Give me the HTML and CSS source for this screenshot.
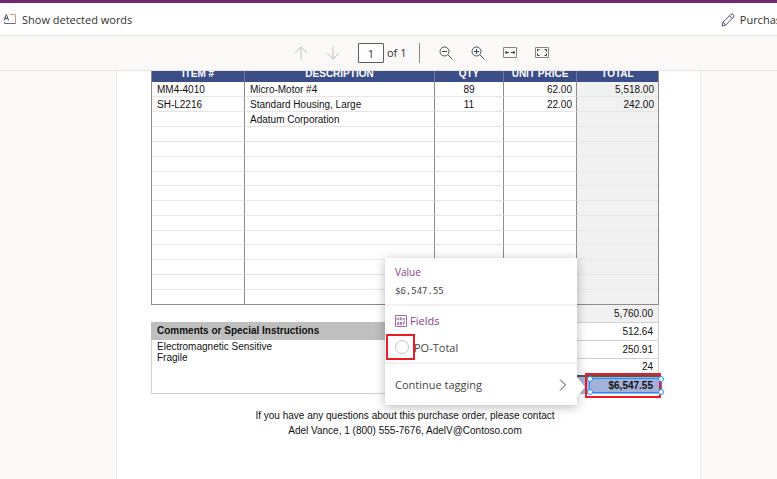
FILE: index.html
```html
<!DOCTYPE html>
<html lang="en">
<head>
<meta charset="utf-8">
<title>Document tagging</title>
<link rel="stylesheet" href="styles.css">
</head>
<body>
<header class="commands">
  <button class="command" type="button">
    <svg width="14" height="14" viewBox="0 0 14 14" fill="none"><path d="M1 7.500 3.300 1.500 5.700 7.500M1.800 5.500H5" stroke="#51496b"/><path d="M7 1.500H12.500V10.500" stroke="#c49a86"/><path d="M1.500 9V10.500H12.500" stroke="#71618b"/></svg>
    <span>Show detected words</span>
  </button>
  <button class="command template" type="button">
    <svg width="14" height="14" viewBox="0 0 14 14" fill="none" stroke="#5d4a70"><path d="M1 13 2 9.200 9.700 1.500Q11 .400 12.300 1.600 13.500 2.900 12.500 4.200L4.700 12Z"/><path d="M8.500 2.700 11.300 5.400M2 9.200 4.700 12"/></svg>
    <span>Purchas</span>
  </button>
</header>
<nav class="pager" aria-label="Page controls">
  <button type="button" class="tool" aria-label="Previous page"><svg width="14" height="14" viewBox="0 0 14 14" fill="none" stroke="#c4c2c0"><path d="M7 13.500V1M1 7 7 1 13 7"/></svg></button>
  <button type="button" class="tool" aria-label="Next page"><svg width="14" height="14" viewBox="0 0 14 14" fill="none" stroke="#c4c2c0"><path d="M7 .500V13M1 7 7 13 13 7"/></svg></button>
  <label class="page-number"><input type="text" value="1" aria-label="Page number"><span>of 1</span></label>
  <span class="divider"></span>
  <button type="button" class="tool" aria-label="Zoom out"><svg width="14" height="14" viewBox="0 0 14 14" fill="none" stroke="#50504f"><circle cx="5.500" cy="5.500" r="4.500"/><path d="M3 5.500H8" stroke="#284a66"/><path d="M9 9 13.500 13.500"/></svg></button>
  <button type="button" class="tool" aria-label="Zoom in"><svg width="14" height="14" viewBox="0 0 14 14" fill="none" stroke="#50504f"><circle cx="5.500" cy="5.500" r="4.500"/><path d="M3 5.500H8M5.500 3V8" stroke="#284a66"/><path d="M9 9 13.500 13.500"/></svg></button>
  <button type="button" class="tool" aria-label="Fit to width"><svg width="14" height="14" viewBox="0 0 14 14" fill="none" stroke="#868482"><path d="M.500 1.500H13.500V11.500H.500Z"/><path d="M2 6.500H6M8 6.500H12M3.500 5 2.500 6.500 3.500 8M10.500 5 11.500 6.500 10.500 8" stroke="#39464f"/></svg></button>
  <button type="button" class="tool" aria-label="Fit to page"><svg width="14" height="14" viewBox="0 0 14 14" fill="none" stroke="#868482"><path d="M.500 1.500H13.500V11.500H.500Z"/><path d="M2.500 5.500V3.500H4.500M9.500 3.500H11.500V5.500M11.500 7.500V9.500H9.500M4.500 9.500H2.500V7.500" stroke="#33414d"/></svg></button>
</nav>
<main class="viewer">
  <article class="sheet">
    <table class="items">
      <colgroup><col class="c-item"><col><col class="c-qty"><col class="c-price"><col class="c-total"></colgroup>
      <thead><tr><th>ITEM #</th><th>DESCRIPTION</th><th>QTY</th><th>UNIT PRICE</th><th>TOTAL</th></tr></thead>
      <tbody>
        <tr><td>MM4-4010</td><td>Micro-Motor #4</td><td>89</td><td>62.00</td><td>5,518.00</td></tr>
        <tr><td>SH-L2216</td><td>Standard Housing, Large</td><td>11</td><td>22.00</td><td>242.00</td></tr>
        <tr><td></td><td>Adatum Corporation</td><td></td><td></td><td></td></tr>
        <tr><td></td><td></td><td></td><td></td><td></td></tr>
        <tr><td></td><td></td><td></td><td></td><td></td></tr>
        <tr><td></td><td></td><td></td><td></td><td></td></tr>
        <tr><td></td><td></td><td></td><td></td><td></td></tr>
        <tr><td></td><td></td><td></td><td></td><td></td></tr>
        <tr><td></td><td></td><td></td><td></td><td></td></tr>
        <tr><td></td><td></td><td></td><td></td><td></td></tr>
        <tr><td></td><td></td><td></td><td></td><td></td></tr>
        <tr><td></td><td></td><td></td><td></td><td></td></tr>
        <tr><td></td><td></td><td></td><td></td><td></td></tr>
        <tr><td></td><td></td><td></td><td></td><td></td></tr>
        <tr><td></td><td></td><td></td><td></td><td></td></tr>
      </tbody>
    </table>
    <div class="summary">
      <section class="comments">
        <h2>Comments or Special Instructions</h2>
        <p>Electromagnetic Sensitive<br>Fragile</p>
      </section>
      <ul class="totals">
        <li>5,760.00</li>
        <li>512.64</li>
        <li>250.91</li>
        <li>24</li>
        <li class="grand">$6,547.55
          <span class="callout total-callout"></span>
          <span class="selection"><i></i><i></i><i></i><i></i></span>
        </li>
      </ul>
      <aside class="card">
        <div class="card-value"><h3>Value</h3><code>$6,547.55</code></div>
        <div class="card-fields">
          <h3><svg width="12" height="12" viewBox="0 0 12 12" fill="none" stroke="#a26ba8"><path d="M.500 .500H11.500V11.500H.500Z"/><path d="M2 5V3.500Q3 2 4 3.500V5M2 4H4M5.500 2V5H7V3.500H5.500M10 3.500H8.500V5H10M3.500 6.500V9.500H2V8H3.500M5 8.500H7V7.500H5V9.500H7M8.500 10V7.500Q8.500 6.500 10 6.500M8 8H10" stroke-width=".8"/></svg>Fields</h3>
          <div class="option"><input type="radio" id="po-total" name="field"><label for="po-total">PO-Total</label><span class="callout radio-callout"></span></div>
        </div>
        <button class="card-more" type="button"><span>Continue tagging</span><svg width="8" height="12" viewBox="0 0 8 12" fill="none" stroke="#484644"><path d="M1 .500 6.500 6 1 11.500"/></svg></button>
      </aside>
    </div>
    <footer class="contact"><p>If you have any questions about this purchase order, please contact</p><p>Adel Vance, 1 (800) 555-7676, AdelV@Contoso.com</p></footer>
  </article>
</main>
</body>
</html>
```
FILE: styles.css
```css
* { box-sizing: border-box; }
html, body { height: 100%; }
body {
  margin: 0;
  display: flex;
  flex-direction: column;
  overflow: hidden;
  background: #faf9f8;
  color: #323130;
  font: 11px/16px "Open Sans", "Noto Sans", sans-serif;
}
button { border: 0; padding: 0; background: none; color: inherit; font: inherit; }
h2, h3, p, ul { margin: 0; padding: 0; font: inherit; }
svg { display: block; flex: none; }

.commands {
  flex: none;
  display: flex;
  justify-content: space-between;
  height: 36px;
  padding: 2px 0 0 3px;
  border-top: 3px solid #742774;
  border-bottom: 1px solid #e6e4e2;
  background: #fff;
}
.command { display: flex; align-items: center; gap: 5px; }
.template { margin-right: -4px; }

.pager {
  flex: none;
  display: flex;
  align-items: center;
  gap: 18px;
  height: 35px;
  padding-left: 294px;
  border-bottom: 1px solid #e6e4e2;
}
.page-number { display: flex; align-items: center; gap: 3px; }
.page-number input {
  width: 26px;
  height: 20px;
  padding: 0;
  border: 1px solid #605e5c;
  border-radius: 1px;
  background: #fff;
  color: inherit;
  font: inherit;
  text-align: center;
}
.divider { width: 1px; height: 20px; margin: 0 1px 0 -5px; background: #8a8886; }

.viewer { flex: 1; min-height: 0; overflow: hidden; padding: 0 76px 0 116px; }
.sheet {
  display: flow-root;
  height: 100%;
  padding: 0 41px 0 34px;
  border: solid #eceae8;
  border-width: 0 1px;
  background: #fff;
  color: #111;
  font: 10px/11px "Liberation Sans", Arial, sans-serif;
}

.items {
  width: 100%;
  margin-top: -6px;
  table-layout: fixed;
  border-collapse: separate;
  border-spacing: 0;
  border: solid #8c8c8c;
  border-width: 0 1px 1px;
}
.c-item { width: 93px; }
.c-qty { width: 69px; }
.c-price { width: 73px; }
.c-total { width: 81px; }
.items th {
  height: 17px;
  padding: 0;
  border-right: 1px solid #6c78a8;
  background: #3b4e87;
  color: #fff;
}
.items td {
  height: 15px;
  padding: 0 5px;
  border-right: 1px solid #8c8c8c;
  border-bottom: 1px solid #e6e6e6;
}
.items tr:nth-child(4n+7) td { height: 14px; }
.items tr > :last-child { border-right: 0; }
.items tbody tr:last-child td { border-bottom: 0; }
.items td:nth-child(3) { text-align: center; }
.items td:nth-child(4), .items td:nth-child(5) { text-align: right; padding-right: 4px; }
.items td:nth-child(5) { background: #f1f1f1; }

.summary { position: relative; display: flex; justify-content: space-between; }
.comments {
  flex: 0 0 56%;
  margin-top: 17px;
  border: 1px solid #d2d2d2;
  border-top: 0;
}
.comments h2 {
  margin: 0 -1px;
  padding: 0 6px;
  background: #bfbfbf;
  font-weight: 700;
  line-height: 18px;
}
.comments p { padding: 1px 5px; }
.totals { width: 83px; list-style: none; text-align: right; line-height: 17px; }
.totals li {
  padding-right: 5px;
  border-right: 1px solid #d2d2d2;
  border-bottom: 1px solid #d2d2d2;
}
.totals li:first-child { background: #f1f1f1; }
.totals li:nth-child(4) { line-height: 16px; border-bottom: 0; }
.totals .grand {
  position: relative;
  border: 0;
  border-top: 2px solid #555;
  padding-right: 6px;
  background: #a5b1d9;
  font-weight: 700;
}
.callout { position: absolute; border: 2px solid #ed1c24; pointer-events: none; }
.total-callout { inset: -4px -2px -4px 9px; z-index: 2; }
.selection { position: absolute; inset: 1px -3px 1px 13px; border: 1px solid #1e90ff; z-index: 3; }
.selection i {
  position: absolute;
  width: 6px;
  height: 6px;
  border: 1px solid #1e90ff;
  border-radius: 50%;
  background: #fff;
}
.selection i:nth-child(odd) { left: -3px; }
.selection i:nth-child(even) { right: -3px; }
.selection i:nth-child(-n+2) { top: -3px; }
.selection i:nth-child(n+3) { bottom: -3px; }

.card {
  position: absolute;
  right: 82px;
  top: -47px;
  width: 192px;
  background: #fff;
  box-shadow: 0 2px 10px rgba(0, 0, 0, .28);
  color: #484644;
  font: 11px/16px "Open Sans", "Noto Sans", sans-serif;
  z-index: 1;
}
.card::after {
  content: "";
  position: absolute;
  left: 100%;
  bottom: 8px;
  border: solid transparent;
  border-width: 10px 0 10px 8px;
  border-left-color: #fff;
}
.card h3 { display: flex; align-items: center; gap: 3px; color: #8a3c8e; }
.card-value { padding: 6px 10px 5px; border-bottom: 2px solid #f3f2f1; }
.card-value h3 { font-size: 10px; }
.card-value code { display: block; margin-top: 3px; font: 9px/16px "DejaVu Sans Mono", monospace; }
.card-fields { padding: 7px 10px 1px; border-bottom: 2px solid #f3f2f1; }
.option { position: relative; display: flex; align-items: center; height: 28px; margin-top: 4px; gap: 5px; }
.option label { padding-top: 2px; }
.option input {
  appearance: none;
  width: 14px;
  height: 14px;
  margin: 0;
  border: 1px solid #c8c6c4;
  border-radius: 50%;
}
.radio-callout { left: -9px; top: 1px; width: 29px; height: 26px; }
.card-more {
  display: flex;
  align-items: center;
  justify-content: space-between;
  width: 100%;
  height: 41px;
  padding: 0 10px;
}
.contact { margin-top: 14px; text-align: center; line-height: 15px; }
```
